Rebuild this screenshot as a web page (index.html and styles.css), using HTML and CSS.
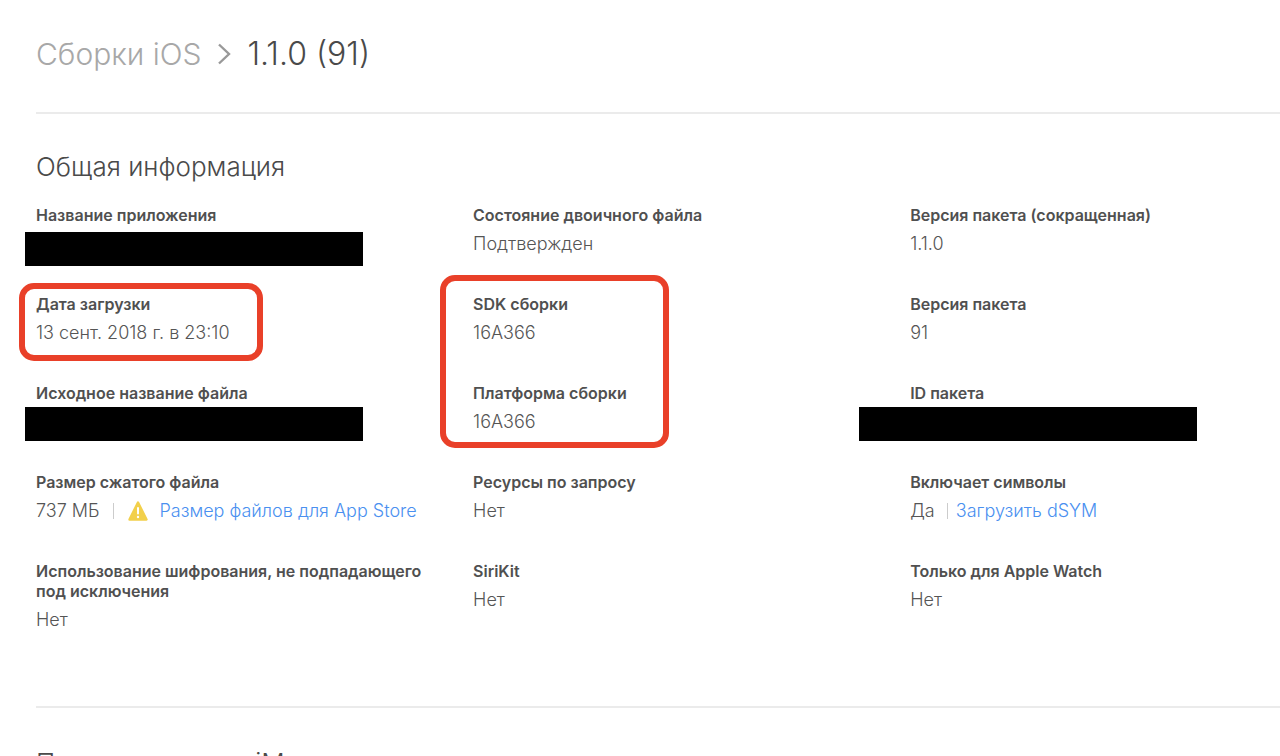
FILE: index.html
```
<!DOCTYPE html>
<html lang="ru">
<head>
    <meta charset="UTF-8">
    <meta name="viewport" content="width=device-width, initial-scale=1.0">
    <title>Сборки iOS</title>
    <link rel="stylesheet" href="styles.css">
</head>
<body>
    <main>
        <header class="breadcrumb">
            <a href="#">Сборки iOS</a>
            <svg width="14" height="22" viewBox="0 0 14 22" aria-hidden="true">
                <path d="M1 1.5 L11 11 L1 20.5" fill="none" stroke="#999" stroke-width="2.4"/>
            </svg>
            <h1>1.1.0 (91)</h1>
        </header>
        <section class="general">
            <h2>Общая информация</h2>
            <dl class="info">
                <div class="item">
                    <dt>Название приложения</dt>
                    <dd><span class="redacted"></span></dd>
                </div>
                <div class="item">
                    <dt>Состояние двоичного файла</dt>
                    <dd>Подтвержден</dd>
                </div>
                <div class="item">
                    <dt>Версия пакета (сокращенная)</dt>
                    <dd>1.1.0</dd>
                </div>
                <div class="item">
                    <dt>Дата загрузки</dt>
                    <dd>13 сент. 2018 г. в 23:10<span class="mark mark-date"></span></dd>
                </div>
                <div class="item">
                    <dt>SDK сборки</dt>
                    <dd>16A366<span class="mark mark-sdk"></span></dd>
                </div>
                <div class="item">
                    <dt>Версия пакета</dt>
                    <dd>91</dd>
                </div>
                <div class="item">
                    <dt>Исходное название файла</dt>
                    <dd><span class="redacted redacted-high"></span></dd>
                </div>
                <div class="item">
                    <dt>Платформа сборки</dt>
                    <dd>16A366</dd>
                </div>
                <div class="item">
                    <dt>ID пакета</dt>
                    <dd><span class="redacted redacted-high redacted-wide"></span></dd>
                </div>
                <div class="item">
                    <dt>Размер сжатого файла</dt>
                    <dd class="with-link">
                        <span>737 МБ</span>
                        <span class="divider"></span>
                        <svg class="warning" width="22" height="22" viewBox="0 0 22 22" aria-hidden="true">
                            <path d="M11 2.5 L19.5 19.5 H2.5 Z" fill="#f2d04b" stroke="#f2d04b" stroke-width="2.4" stroke-linejoin="round"/>
                            <path d="M11 8 V13.5" stroke="#fff" stroke-width="2" stroke-linecap="round"/>
                            <circle cx="11" cy="17" r="1.2" fill="#fff"/>
                        </svg>
                        <a href="#">Размер файлов для App Store</a>
                    </dd>
                </div>
                <div class="item">
                    <dt>Ресурсы по запросу</dt>
                    <dd>Нет</dd>
                </div>
                <div class="item">
                    <dt>Включает символы</dt>
                    <dd class="with-link">
                        <span>Да</span>
                        <span class="divider divider-tight"></span>
                        <a href="#">Загрузить dSYM</a>
                    </dd>
                </div>
                <div class="item">
                    <dt>Использование шифрования, не подпадающего под исключения</dt>
                    <dd>Нет</dd>
                </div>
                <div class="item">
                    <dt>SiriKit</dt>
                    <dd>Нет</dd>
                </div>
                <div class="item">
                    <dt>Только для Apple Watch</dt>
                    <dd>Нет</dd>
                </div>
            </dl>
        </section>
        <section class="imessage">
            <h2>Приложение для iMessage</h2>
        </section>
    </main>
</body>
</html>
```
FILE: styles.css
```
html {
    height: 100%;
    overflow: hidden;
}
body {
    height: 100%;
    margin: 0;
    overflow: hidden;
    background-color: #fff;
    color: #4a4a4a;
    font-family: Inter, "Liberation Sans", sans-serif;
    font-weight: 300;
}
main {
    padding-left: 36px;
}
a {
    color: #4a90f0;
    text-decoration: none;
}
.breadcrumb {
    display: flex;
    align-items: center;
    gap: 16px;
    padding: 34px 0 38px;
    border-bottom: 2px solid #ebebeb;
    line-height: 40px;
}
.breadcrumb a {
    color: #a8a8a8;
    font-size: 30px;
}
h1 {
    margin: 0;
    font-size: 32px;
    font-weight: 300;
}
h2 {
    margin: 0;
    font-size: 26px;
    font-weight: 300;
    line-height: 32px;
}
.general {
    padding: 37px 0 74px;
    border-bottom: 2px solid #ebebeb;
}
.info {
    display: grid;
    grid-template-columns: 13fr 13fr 11fr;
    row-gap: 38px;
    margin: 22px 0 0;
}
.item {
    position: relative;
    padding-right: 40px;
}
dt {
    color: #505050;
    font-size: 16px;
    font-weight: 600;
    line-height: 20px;
}
dd {
    min-height: 24px;
    margin: 7px 0 0;
    color: #555;
    font-size: 18px;
    line-height: 24px;
}
.with-link {
    display: flex;
    align-items: center;
    white-space: nowrap;
}
.divider {
    width: 1px;
    height: 16px;
    margin: 0 13px;
    background-color: #ccc;
}
.divider-tight {
    margin: 0 8px 0 12px;
}
.warning {
    margin-right: 11px;
}
/* black bars over private values */
.redacted {
    position: absolute;
    top: 27px;
    left: -11px;
    width: 338px;
    height: 34px;
    background-color: #000;
}
.redacted-high {
    top: 24px;
}
.redacted-wide {
    left: -51px;
}
/* red outlines around the important fields */
.mark {
    position: absolute;
    box-sizing: border-box;
    border: 6px solid #e94029;
    border-radius: 15px;
}
.mark-date {
    top: -11px;
    left: -17px;
    width: 244px;
    height: 78px;
}
.mark-sdk {
    top: -19px;
    left: -33px;
    width: 229px;
    height: 173px;
}
.imessage {
    padding-top: 39px;
}
```
